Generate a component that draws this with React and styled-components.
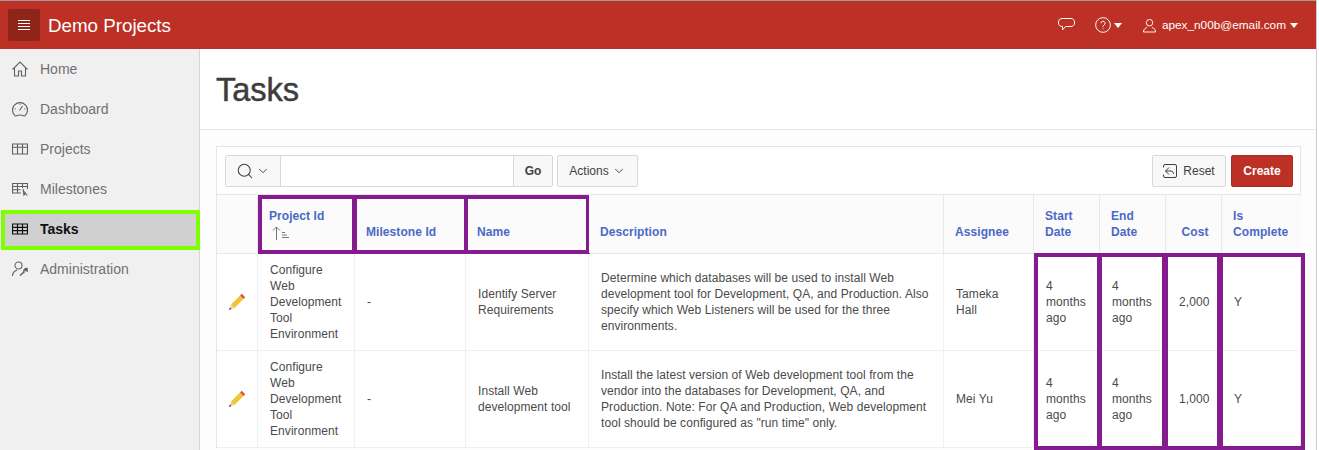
import React from 'react';
import styled, { createGlobalStyle, css } from 'styled-components';
import { ChevronDown, Search } from 'lucide-react';

const GlobalStyle = createGlobalStyle`
  html, body {
    margin: 0;
    padding: 0;
    height: 450px;
    overflow: hidden;
    background: #fff;
    font-family: "Liberation Sans", Arial, sans-serif;
    color: #404040;
  }
  * { box-sizing: border-box; }
`;

const Page = styled.div`
  width: 1317px;
  height: 450px;
  overflow: hidden;
  border-right: 1px solid #cfcfcf;
  display: flex;
  flex-direction: column;
`;

const Header = styled.header`
  height: 49px;
  flex: none;
  display: flex;
  align-items: center;
  background: #bc3025;
  border-top: 1px solid #9c9c9c;
  padding: 0 18px 0 8px;
  color: #fff;
`;

const MenuButton = styled.div`
  width: 32px;
  height: 32px;
  border-radius: 2px;
  background: #8f2419;
  display: flex;
  align-items: center;
  justify-content: center;
  margin-right: 8px;
`;

const Brand = styled.div`
  font-size: 18.75px;
  padding-top: 1px;
  flex: 1;
`;

const HeaderItem = styled.div`
  display: flex;
  align-items: center;
  font-size: 11.8px;
  margin-left: ${({ $gap }) => $gap}px;
`;

const Caret = styled.span`
  width: 0;
  height: 0;
  border-left: 4.5px solid transparent;
  border-right: 4.5px solid transparent;
  border-top: 5px solid #fff;
  margin-left: ${({ $gap }) => $gap}px;
`;

const Body = styled.div`
  flex: 1;
  display: flex;
  min-height: 0;
`;

const Sidebar = styled.nav`
  width: 200px;
  flex: none;
  background: #f0f0f0;
  border-right: 1px solid #d6d6d6;
`;

const NavItem = styled.div`
  height: 40px;
  display: flex;
  align-items: center;
  font-size: 14px;
  color: #707070;
  padding-left: 12px;
  gap: 12px;
  ${({ $active }) =>
    $active &&
    css`
      margin: 1px -1px -1px 1px;
      padding: 0 0 2px 7px;
      background: #d0d0d0;
      border: 4px solid #80ff00;
      color: #111;
      font-weight: 700;
    `}
`;

const NavIcon = styled.svg`
  width: 16px;
  height: 16px;
  flex: none;
  fill: none;
  stroke: ${({ $active }) => ($active ? '#111' : '#606060')};
  stroke-width: 1.1;
`;

const Main = styled.main`
  flex: 1;
  min-width: 0;
  background: #fdfdfd;
`;

const TitleBar = styled.div`
  height: 81px;
  background: #fff;
  border-bottom: 1px solid #e6e6e6;
  padding: 23px 16px 0;
`;

const Title = styled.h1`
  margin: 0;
  font-size: 32.5px;
  line-height: 36px;
  font-weight: 400;
  -webkit-text-stroke: 0.5px #3d3d3d;
  color: #3d3d3d;
`;

const Region = styled.section`
  margin: 16px 15px 0 16px;
  border: 1px solid #e6e6e6;
  border-bottom: 0;
  background: #fff;
`;

const Toolbar = styled.div`
  height: 48px;
  display: flex;
  align-items: center;
  padding: 0 7px 0 8px;
  border-bottom: 1px solid #e6e6e6;
`;

const SearchGroup = styled.div`
  display: flex;
  height: 32px;
  width: 328px;
  border: 1px solid #d9d9d9;
  border-radius: 2px;
  margin-right: 4px;
  background: #fff;
`;

const SearchToggle = styled.div`
  width: 55px;
  flex: none;
  display: flex;
  align-items: center;
  justify-content: center;
  gap: 2px;
  background: #f8f8f8;
  border-right: 1px solid #d9d9d9;
`;

const SearchInput = styled.div`
  flex: 1;
`;

const GoButton = styled.div`
  width: 39px;
  flex: none;
  display: flex;
  align-items: center;
  justify-content: center;
  font-size: 12px;
  font-weight: 700;
  background: #f8f8f8;
  border-left: 1px solid #d9d9d9;
`;

const Button = styled.div`
  height: 32px;
  display: flex;
  align-items: center;
  justify-content: center;
  gap: 3px;
  font-size: 12px;
  border-radius: 2px;
  width: ${({ $width }) => $width}px;
  margin-left: ${({ $gap }) => $gap || 0};
  background: #f8f8f8;
  border: 1px solid #d9d9d9;
  ${({ $hot }) =>
    $hot &&
    css`
      background: #bc3025;
      border-color: #a92b21;
      color: #fff;
      font-weight: 700;
    `}
`;

const Table = styled.table`
  width: 1085px;
  table-layout: fixed;
  border-collapse: collapse;
  font-size: 12px;
  line-height: 16px;
  letter-spacing: 0.07px;
`;

const markedBox = css`
  content: '';
  position: absolute;
  pointer-events: none;
  border: 0 solid #841c8f;
`;

const HeadCell = styled.th`
  position: relative;
  height: 58px;
  padding: 12px 12px 13px 11.5px;
  vertical-align: bottom;
  text-align: ${({ $right }) => ($right ? 'right' : 'left')};
  font-weight: 700;
  color: #4a69c6;
  background: #fbfbfb;
  border-left: 1px solid #e8e8e8;
  border-bottom: 1px solid #e8e8e8;
  &:first-child { border-left: 0; }
  ${({ $marked }) =>
    $marked &&
    css`
      &::after {
        ${markedBox}
        top: 0;
        bottom: -1px;
        left: ${$marked[0]}px;
        right: ${$marked[1]}px;
        border-width: 4px;
      }
    `}
`;

const Cell = styled.td`
  position: relative;
  height: 97px;
  padding: 8px 11px 8px 12.5px;
  vertical-align: middle;
  text-align: ${({ $right }) => ($right ? 'right' : 'left')};
  color: #4a4a4a;
  border-left: 1px solid #f0f0f0;
  border-bottom: 1px solid #f0f0f0;
  overflow-wrap: break-word;
  &:first-child { border-left: 0; }
  ${({ $box, $first, $last }) =>
    $box &&
    css`
      &::after {
        ${markedBox}
        top: -1px;
        bottom: ${$last ? -3 : -1}px;
        left: ${$box[0]}px;
        right: ${$box[1]}px;
        border-width: ${$first ? 4 : 0}px 4px ${$last ? 4 : 0}px;
      }
    `}
`;

const Arrow = styled.svg`
  display: block;
  width: 20px;
  height: 14px;
  margin: 2px 0 0 3px;
  fill: none;
  stroke: #777;
  stroke-width: 1;
`;

const PencilIcon = styled.svg`
  display: block;
  width: 18px;
  height: 18px;
  margin-left: -1.5px;
`;

const Pencil = () => (
  <PencilIcon viewBox="0 0 18 18">
    <polygon points="1,17 3,11.5 6.5,15" fill="#e9d3a2" />
    <polygon points="1,17 1.9,14.5 3.5,16" fill="#444" />
    <polygon points="3,11.5 12,2.5 15.5,6 6.5,15" fill="#f0c435" />
    <polygon points="12,2.5 13.8,0.8 17.2,4.2 15.5,6" fill="#d9534a" />
  </PencilIcon>
);

const icons = {
  home: <path d="M.5 8.500 8 1l7.500 7.500M2.500 6.500v8.500h4v-5h3v5h4V6.500" />,
  dashboard: (
    <>
      <path d="M3 14.700a7.500 7.500 0 1 1 10 0c-.5.3-1 .3-1.500.1a9 9 0 0 0-7 0c-.5.2-1 .2-1.500-.1Z" />
      <path d="m7.500 9.500 3-4.500M2.700 8h1M12.300 8h1M8 2.700v1" />
    </>
  ),
  projects: <path d="M.5 3h15v10H.5ZM.5 6.300h15M5.500 3v10M10.500 3v10" />,
  milestones: (
    <>
      <path d="M15.500 8V2.500H.5V12H9M.5 5.500h15M.5 8.700h8M5.500 2.500V12M10.500 2.500V7" />
      <path d="m11 8 1 6 1.300-1.800 2 2.300" fill="currentColor" />
    </>
  ),
  tasks: <path d="M.5 3h15v10H.5ZM.5 6.300h15M.5 9.700h15M5.500 3v10M10.500 3v10" strokeWidth="1.200" />,
  admin: (
    <>
      <circle cx="6.500" cy="4.500" r="3.500" />
      <path d="M.5 15c0-3 2-5 4.500-6" />
      <path d="m8 14.500 4-3.500a2.500 2.500 0 0 1 3-3.300l-1.300 1.500 1.300.9 1-1" strokeWidth="1.500" />
    </>
  ),
};

const navItems = [
  { label: 'Home', icon: 'home' },
  { label: 'Dashboard', icon: 'dashboard' },
  { label: 'Projects', icon: 'projects' },
  { label: 'Milestones', icon: 'milestones' },
  { label: 'Tasks', icon: 'tasks', active: true },
  { label: 'Administration', icon: 'admin' },
];

const columns = [
  { w: 40 },
  { w: 97, label: 'Project Id', sorted: true, marked: [0, -2] },
  { w: 111, label: 'Milestone Id', marked: [-2, -4] },
  { w: 123, label: 'Name', marked: [-2, -2] },
  { w: 355, label: 'Description' },
  { w: 90, label: 'Assignee' },
  { w: 66, label: 'Start Date', box: [0, -3] },
  { w: 66, label: 'End Date', box: [-3, -3] },
  { w: 56, label: 'Cost', right: true, box: [-4, -2] },
  { w: 81, label: 'Is Complete', box: [-5, -3] },
];

const tasks = [
  {
    name: 'Identify Server Requirements',
    description:
      'Determine which databases will be used to install Web development tool for Development, QA, and Production. Also specify which Web Listeners will be used for the three environments.',
    assignee: 'Tameka Hall',
    cost: '2,000',
  },
  {
    name: 'Install Web development tool',
    description:
      'Install the latest version of Web development tool from the vendor into the databases for Development, QA, and Production. Note: For QA and Production, Web development tool should be configured as "run time" only.',
    assignee: 'Mei Yu',
    cost: '1,000',
  },
];

const App = () => (
  <Page>
    <GlobalStyle />
    <Header>
      <MenuButton>
        <svg width="14" height="12" viewBox="0 0 14 12" stroke="#fff" strokeWidth="1">
          <path d="M1 1.500h12M1 4.500h12M1 7.500h12M1 10.500h12" />
        </svg>
      </MenuButton>
      <Brand>Demo Projects</Brand>
      <HeaderItem>
        <svg width="17" height="14" viewBox="0 0 17 14" fill="none" stroke="#fff" strokeWidth="1">
          <path d="M4 .5h9c2 0 3.500 1.500 3.500 3.500v1c0 2-1.500 3.500-3.500 3.500H7.500l-3 3.500v-3.500H4C2 8.500.5 7 .5 5V4C.5 2 2 .5 4 .5Z" />
        </svg>
      </HeaderItem>
      <HeaderItem $gap={20}>
        <svg width="16" height="16" viewBox="0 0 17 17" fill="none" stroke="#fff" strokeWidth="1">
          <circle cx="8.500" cy="8.500" r="7.800" />
          <path d="M6.300 6.700a2.200 2.200 0 1 1 3.300 1.900c-.8.5-1.100 1-1.100 1.900M8.500 12v1" />
        </svg>
        <Caret $gap={3} />
      </HeaderItem>
      <HeaderItem $gap={21}>
        <svg width="13" height="15" viewBox="0 0 14 15" fill="none" stroke="#fff" strokeWidth="1" style={{ marginRight: 6 }}>
          <circle cx="7" cy="4.500" r="3.500" />
          <path d="M.5 14.500c0-3 1.800-4 4-5M13.500 14.500c0-3-1.800-4-4-5M.5 14.500h13" />
        </svg>
        apex_n00b@email.com
        <Caret $gap={4} />
      </HeaderItem>
    </Header>
    <Body>
      <Sidebar>
        {navItems.map((item) => (
          <NavItem key={item.label} $active={item.active}>
            <NavIcon viewBox="0 0 16 16" $active={item.active}>{icons[item.icon]}</NavIcon>
            {item.label}
          </NavItem>
        ))}
      </Sidebar>
      <Main>
        <TitleBar>
          <Title>Tasks</Title>
        </TitleBar>
        <Region>
          <Toolbar>
            <SearchGroup>
              <SearchToggle>
                <Search size={18} strokeWidth={1.4} />
                <ChevronDown size={14} strokeWidth={1.6} />
              </SearchToggle>
              <SearchInput />
              <GoButton>Go</GoButton>
            </SearchGroup>
            <Button $width={81}>
              Actions
              <ChevronDown size={14} strokeWidth={1.6} />
            </Button>
            <Button $width={74} $gap="auto">
              <svg width="14" height="14" viewBox="0 0 14 14" fill="none" stroke="#404040" strokeWidth="1" style={{ marginRight: 3 }}>
                <path d="M.5 3.500V2A1.500 1.500 0 0 1 2 .5h10A1.500 1.500 0 0 1 13.500 2v10a1.500 1.500 0 0 1-1.500 1.500H2A1.500 1.500 0 0 1 .5 12v-1.500" />
                <path d="M6 3.500 2.500 7 6 10.500M2.500 7H8c1.500 0 2.500 1 2.500 3" />
              </svg>
              Reset
            </Button>
            <Button $width={62} $gap="5px" $hot>
              Create
            </Button>
          </Toolbar>
          <Table>
            <colgroup>
              {columns.map((col, i) => (
                <col key={i} style={{ width: col.w }} />
              ))}
            </colgroup>
            <thead>
              <tr>
                {columns.map((col, i) => (
                  <HeadCell key={i} $right={col.right} $marked={col.marked}>
                    {col.label}
                    {col.sorted && (
                      <Arrow viewBox="0 0 20 14">
                        <path d="M4.500 14V1M1 4.500 4.500 1 8 4.500M10 6.500h3M10 9h5M10 11.500h7" />
                      </Arrow>
                    )}
                  </HeadCell>
                ))}
              </tr>
            </thead>
            <tbody>
              {tasks.map((task, r) => {
                const boxProps = (c) => ({
                  $box: columns[c].box,
                  $first: r === 0,
                  $last: r === tasks.length - 1,
                });
                return (
                  <tr key={task.name}>
                    <Cell><Pencil /></Cell>
                    <Cell>Configure Web Development Tool Environment</Cell>
                    <Cell>-</Cell>
                    <Cell>{task.name}</Cell>
                    <Cell>{task.description}</Cell>
                    <Cell>{task.assignee}</Cell>
                    <Cell {...boxProps(6)}>4 months ago</Cell>
                    <Cell {...boxProps(7)}>4 months ago</Cell>
                    <Cell $right {...boxProps(8)}>{task.cost}</Cell>
                    <Cell {...boxProps(9)}>Y</Cell>
                  </tr>
                );
              })}
            </tbody>
          </Table>
        </Region>
      </Main>
    </Body>
  </Page>
);

export default App;
